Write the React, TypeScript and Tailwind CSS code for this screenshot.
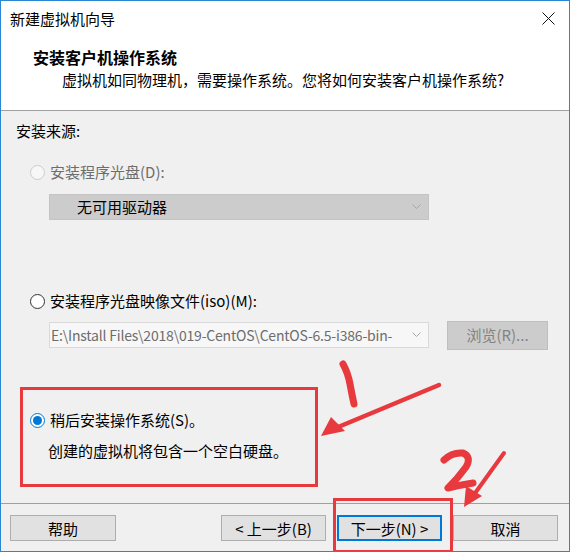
import React from "react";

const font = { fontFamily: '"Noto Sans CJK SC", "Noto Sans", sans-serif' };

function Radio({ state }: { state: "disabled" | "off" | "on" }) {
  if (state === "on") {
    return (
      <span className="flex h-[15px] w-[15px] items-center justify-center rounded-full border border-[#0078d7] bg-white">
        <span className="h-[9px] w-[9px] rounded-full bg-[#0078d7]" />
      </span>
    );
  }
  return (
    <span
      className={
        state === "disabled"
          ? "h-[15px] w-[15px] rounded-full border border-[#cccccc] bg-[#f7f7f7]"
          : "h-[15px] w-[15px] rounded-full border border-[#333333] bg-white"
      }
    />
  );
}

function Chevron({ color }: { color: string }) {
  return (
    <svg width="9" height="6" viewBox="0 0 9 6" className="shrink-0">
      <path d="M0.5 0.5 L4.5 4.5 L8.5 0.5" fill="none" stroke={color} strokeWidth="1" />
    </svg>
  );
}

function Btn({ label, primary = false, w = "w-[105px]" }: { label: string; primary?: boolean; w?: string }) {
  return (
    <button
      className={
        primary
          ? `${w} h-[26px] border-2 border-[#0078d7] bg-[#e1e1e1] text-[15px] leading-none text-black`
          : `${w} h-[26px] border border-[#adadad] bg-[#e1e1e1] text-[15px] leading-none text-black`
      }
    >
      {label}
    </button>
  );
}

function Annotations() {
  const red = "#e8393f";
  return (
    <svg
      width="570"
      height="552"
      viewBox="0 0 570 552"
      className="pointer-events-none absolute left-0 top-0"
    >
      {/* boxes */}
      <rect x="20.5" y="387.5" width="295" height="97" fill="none" stroke={red} strokeWidth="3" />
      <rect x="333.5" y="498.5" width="117" height="52" fill="none" stroke={red} strokeWidth="3" />
      {/* "1" */}
      <path d="M342 363 Q347 372 349 383 Q351 394 353 403" fill="none" stroke={red} strokeWidth="7" strokeLinecap="round" />
      {/* arrow 1 */}
      <path d="M438 384 L330 429" fill="none" stroke={red} strokeWidth="4.5" strokeLinecap="round" />
      <polygon points="320,435 330,416 344,430" fill={red} />
      {/* "2" */}
      <path
        d="M443 459 Q451 451 462 452 Q471 456 465 466 Q457 477 447 487 Q459 484 472 482"
        fill="none"
        stroke={red}
        strokeWidth="7"
        strokeLinecap="round"
        strokeLinejoin="round"
      />
      {/* arrow 2 */}
      <path d="M503 452 L472 495" fill="none" stroke={red} strokeWidth="4" strokeLinecap="round" />
      <polygon points="463,506 465,485 481,495" fill={red} />
    </svg>
  );
}

export default function App() {
  return (
    <div
      className="relative flex h-[552px] w-[570px] flex-col overflow-hidden border border-[#2b87d3] bg-[#f0f0f0] text-[15px] text-black"
      style={font}
    >
      {/* title bar */}
      <div className="flex h-[35px] items-center justify-between bg-white pl-[9px] pr-[14px]">
        <span className="leading-[20px]">新建虚拟机向导</span>
        <svg width="13" height="13" viewBox="0 0 13 13">
          <path d="M0.5 0.5 L12.5 12.5 M12.5 0.5 L0.5 12.5" stroke="#111" strokeWidth="1" />
        </svg>
      </div>

      {/* header */}
      <div className="flex h-[75px] flex-col border-b border-[#a0a0a0] bg-white pt-[10px]">
        <div className="pl-[32px] text-[16px] font-bold leading-[22px]">安装客户机操作系统</div>
        <div className="mt-[1px] pl-[61px] leading-[22px]">
          虚拟机如同物理机，需要操作系统。您将如何安装客户机操作系统?
        </div>
      </div>

      {/* body */}
      <div className="flex flex-1 flex-col pl-[15px] pt-[10px]">
        <div className="leading-[20px]">安装来源:</div>

        <div className="ml-[14px] mt-[21px] flex h-[20px] items-center gap-[5px] text-[#6d6d6d]">
          <Radio state="disabled" />
          <span>安装程序光盘(D):</span>
        </div>
        <div className="ml-[33px] mt-[12px] flex h-[26px] w-[380px] items-center justify-between border border-[#c4c4c4] bg-[#cccccc] pl-[27px] pr-[7px]">
          <span className="text-black">无可用驱动器</span>
          <Chevron color="#a6a6a6" />
        </div>

        <div className="ml-[14px] mt-[71px] flex h-[20px] items-center gap-[5px]">
          <Radio state="off" />
          <span>安装程序光盘映像文件(iso)(M):</span>
        </div>
        <div className="ml-[33px] mt-[10px] flex items-start">
          <div className="mt-[1px] flex h-[26px] w-[380px] items-center gap-[8px] border border-[#d9d9d9] bg-[#f7f7f7] pl-[1px] pr-[7px]">
            <span className="min-w-0 flex-1 whitespace-nowrap text-[14px] tracking-[-0.2px] text-[#6d6d6d]">
              E:\Install Files\2018\019-CentOS\CentOS-6.5-i386-bin-
            </span>
            <Chevron color="#a6a6a6" />
          </div>
          <div className="ml-[18px] flex h-[29px] w-[101px] items-center justify-center border border-[#bfbfbf] bg-[#cccccc] text-[#838383]">
            浏览(R)...
          </div>
        </div>

        <div className="ml-[14px] mt-[60px] flex h-[20px] items-center gap-[5px]">
          <Radio state="on" />
          <span>稍后安装操作系统(S)。</span>
        </div>
        <div className="ml-[32px] mt-[11px] leading-[20px]">创建的虚拟机将包含一个空白硬盘。</div>
      </div>

      {/* footer */}
      <div className="flex h-[48px] items-start border-t border-[#a0a0a0] pl-[9px] pt-[11px]">
        <Btn label="帮助" w="w-[106px]" />
        <div className="ml-[105px] flex gap-[11px]">
          <Btn label="< 上一步(B)" />
          <Btn label="下一步(N) >" primary />
          <Btn label="取消" />
        </div>
      </div>

      <Annotations />
    </div>
  );
}
